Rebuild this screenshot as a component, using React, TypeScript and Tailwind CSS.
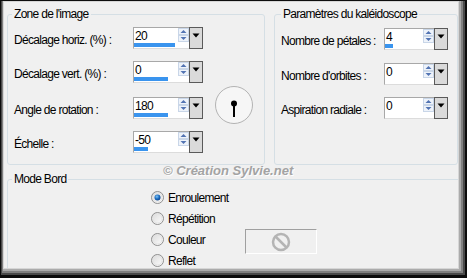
import React from "react";

function UpDown() {
  return (
    <svg width="11" height="14" viewBox="0 0 11 14" className="block">
      <rect x="0.5" y="0.5" width="10" height="6" fill="#eef3fa" stroke="#c9d6e8" />
      <rect x="0.5" y="7.5" width="10" height="6" fill="#eef3fa" stroke="#c9d6e8" />
      <path d="M2.5 5 L5.5 2 L8.5 5Z" fill="#5274b3" />
      <path d="M2.5 9 L5.5 12 L8.5 9Z" fill="#5274b3" />
    </svg>
  );
}

function Spin({ value, bar, fieldW }: { value: string; bar: number; fieldW: number }) {
  return (
    <div className="flex h-[22px] shrink-0">
      <div className="flex border-t border-l border-b border-t-[#a8a8a8] border-l-[#a8a8a8] border-b-[#dcdcdc] bg-white">
        <div className="flex flex-col" style={{ width: fieldW }}>
          <div className="flex-1 pl-[1px] pt-[2px] text-[12px] leading-[12px] text-black">{value}</div>
          <div className="h-[4px] mb-[1px] bg-[#3a94ee]" style={{ width: bar }} />
        </div>
        <div className="pt-0">
          <UpDown />
        </div>
      </div>
      <div className="flex w-[14px] justify-center border border-[#5a5a5a] bg-[#dadada] pt-[5px]">
        <svg width="8" height="5" viewBox="0 0 8 5" className="block">
          <path d="M0.5 0.5 L7.5 0.5 L4 4.5Z" fill="#000" />
        </svg>
      </div>
    </div>
  );
}

function Radio({ checked, label }: { checked?: boolean; label: string }) {
  return (
    <div className="flex h-[21px] items-center">
      <svg width="13" height="13" viewBox="0 0 13 13" className="block shrink-0">
        <defs>
          <linearGradient id="rg" x1="0" y1="0" x2="1" y2="1">
            <stop offset="0" stopColor="#d8d8d8" />
            <stop offset="1" stopColor="#ffffff" />
          </linearGradient>
          <radialGradient id="dot" cx="0.4" cy="0.35" r="0.7">
            <stop offset="0" stopColor="#7ec3f4" />
            <stop offset="0.55" stopColor="#1b6cc0" />
            <stop offset="1" stopColor="#0b3e86" />
          </radialGradient>
        </defs>
        <circle cx="6.5" cy="6.5" r="6" fill="url(#rg)" stroke="#8f8f8f" />
        <circle cx="6.5" cy="6.5" r="4.5" fill="none" stroke="#e4e4e4" />
        {checked && <circle cx="6.5" cy="6.5" r="3" fill="url(#dot)" />}
      </svg>
      <span className="ml-[4px] text-[12px] leading-[14px]">{label}</span>
    </div>
  );
}

function Row({ label, labelW, children }: { label: string; labelW: number; children: React.ReactNode }) {
  return (
    <div className="flex items-center">
      <div className="pt-[4px] text-[12px] leading-[14px]" style={{ width: labelW }}>
        {label}
      </div>
      {children}
    </div>
  );
}

export default function App() {
  return (
    <div className="w-[467px] h-[278px] bg-[#0d0d0d] pl-[1px] pt-[1px] pr-[2px] pb-[3px] font-['Liberation_Sans',Arial,sans-serif] tracking-[-0.7px] text-black">
      <div className="h-full bg-[#4a4a4a] pl-[1px] pr-[2px] pb-[2px]">
        <div className="h-full bg-[#808080] pl-[1px] pr-[2px] pb-[2px]">
          <div className="h-full bg-[#ababab] pr-[2px] pb-[2px]">
            <div className="h-full bg-[#d6d6d6] p-[1px]">
              <div className="relative h-full overflow-hidden bg-[#f0f0f0]">
                <div className="flex pl-[3px] pt-[5px]">
                  <fieldset className="h-[158px] w-[258px] shrink-0 rounded-[3px] border border-[#d5dfe5] pl-[4px] pt-[6px]">
                    <legend className="px-[2px] text-[12px] leading-[14px]">Zone de l'image</legend>
                    <div className="flex pl-[2px]">
                      <div className="flex w-[189px] flex-col">
                        <Row label="Décalage horiz. (%) :" labelW={119}>
                          <Spin value="20" bar={41} fieldW={44} />
                        </Row>
                        <div className="mt-[12px]">
                          <Row label="Décalage vert. (%) :" labelW={119}>
                            <Spin value="0" bar={34} fieldW={44} />
                          </Row>
                        </div>
                        <div className="mt-[14px]">
                          <Row label="Angle de rotation :" labelW={119}>
                            <Spin value="180" bar={34} fieldW={44} />
                          </Row>
                        </div>
                        <div className="mt-[12px]">
                          <Row label="Échelle :" labelW={119}>
                            <Spin value="-50" bar={14} fieldW={44} />
                          </Row>
                        </div>
                      </div>
                      <div className="ml-[11px] mt-[58px]">
                        <svg width="40" height="40" viewBox="0 0 40 40" className="block">
                          <circle cx="20" cy="20" r="18.5" fill="#f6f6f6" stroke="#b3b3b3" />
                          <line x1="20" y1="18.5" x2="20" y2="32" stroke="#000" strokeWidth="2" />
                          <circle cx="20" cy="18.5" r="3" fill="#000" />
                        </svg>
                      </div>
                    </div>
                  </fieldset>
                  <fieldset className="ml-[9px] h-[158px] w-[184px] shrink-0 rounded-[3px] border border-[#d5dfe5] pl-[6px] pt-[7px]">
                    <legend className="px-[2px] text-[12px] leading-[14px]">Paramètres du kaléidoscope</legend>
                    <div className="flex flex-col">
                      <Row label="Nombre de pétales :" labelW={103}>
                        <Spin value="4" bar={8} fieldW={38} />
                      </Row>
                      <div className="mt-[13px]">
                        <Row label="Nombre d'orbites :" labelW={103}>
                          <Spin value="0" bar={0} fieldW={38} />
                        </Row>
                      </div>
                      <div className="mt-[12px]">
                        <Row label="Aspiration radiale :" labelW={103}>
                          <Spin value="0" bar={0} fieldW={38} />
                        </Row>
                      </div>
                    </div>
                  </fieldset>
                </div>
                <div className="pl-[3px] pt-[7px]">
                  <fieldset className="h-[140px] w-[460px] rounded-[3px] border border-[#d5dfe5] pl-[4px] pt-[1px]">
                    <legend className="px-[2px] text-[12px] leading-[14px]">Mode Bord</legend>
                    <div className="flex pl-[139px]">
                      <div className="flex w-[94px] flex-col">
                        <Radio checked label="Enroulement" />
                        <Radio label="Répétition" />
                        <Radio label="Couleur" />
                        <Radio label="Reflet" />
                      </div>
                      <div className="mt-[42px] flex h-[25px] w-[72px] items-center justify-center border border-t-[#a0a0a0] border-l-[#a0a0a0] border-b-[#ffffff] border-r-[#ffffff] bg-[#f0f0f0]">
                        <svg width="20" height="20" viewBox="0 0 20 20" className="block">
                          <circle cx="10" cy="10" r="8" fill="none" stroke="#b4b4b4" strokeWidth="2.5" />
                          <line x1="4.5" y1="4.5" x2="15.5" y2="15.5" stroke="#b4b4b4" strokeWidth="2.5" />
                        </svg>
                      </div>
                    </div>
                  </fieldset>
                </div>
                <div className="absolute left-[159px] top-[161px] text-[13px] font-bold italic leading-[16px] tracking-normal text-[#a3a3a3] [text-shadow:1px_1px_0_#ffffff]">
                  © Création Sylvie.net
                </div>
              </div>
            </div>
          </div>
        </div>
      </div>
    </div>
  );
}
